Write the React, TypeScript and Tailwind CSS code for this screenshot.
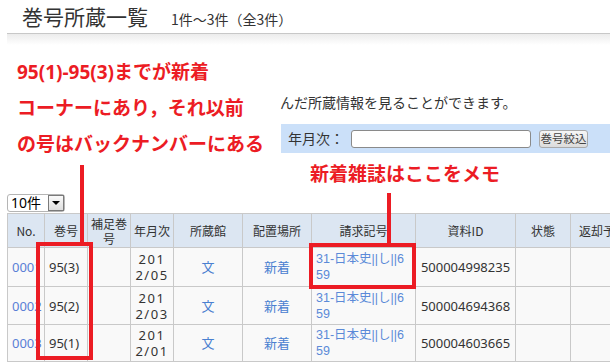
import React from 'react';

const rows = [
  { no: '0001', vol: '95(3)', ym: ['201', '2/05'], id: '500004998235' },
  { no: '0002', vol: '95(2)', ym: ['201', '2/03'], id: '500004694368' },
  { no: '0003', vol: '95(1)', ym: ['201', '2/01'], id: '500004603665' },
];

const rowHeights = ['h-[39px]', 'h-[38px]', 'h-[37px]'];

export default function App() {
  return (
    <div className="relative w-[610px] h-[364px] overflow-hidden bg-white text-[#333] font-['Noto_Sans','Noto_Sans_CJK_JP',sans-serif]">
      {/* page title */}
      <div className="flex items-baseline h-[33px] pl-[22px] pt-[1px]">
        <h1 className="text-[21px] leading-[30px] font-['Noto_Sans_CJK_JP',sans-serif]">巻号所蔵一覧</h1>
        <span className="ml-[23px] text-[14px] font-['Noto_Sans_CJK_JP',sans-serif]">1件～3件（全3件）</span>
      </div>
      <div className="ml-[7px] h-[12px] border-t border-[#c8c8c8] bg-gradient-to-b from-[#ececec] to-white" />

      {/* annotation + search area */}
      <div className="flex h-[117px]">
        <div className="w-[280px] pl-[17px] pt-[9px] text-[19px] leading-[36px] font-bold text-[#ec1c24]">
          <div>95(1)-95(3)までが新着</div>
          <div>コーナーにあり，それ以前</div>
          <div>の号はバックナンバーにある</div>
        </div>
        <div className="flex-1 pt-[48px]">
          <p className="text-[14px] leading-[20px] whitespace-nowrap">んだ所蔵情報を見ることができます。</p>
          <div className="mt-[11px] ml-[1px] h-[29px] bg-[#cbe0f9] flex items-center pl-[7px]">
            <span className="text-[14px]">年月次：</span>
            <input className="ml-[7px] w-[180px] h-[18px] bg-white border border-[#8a8a8a] rounded-[3px]" />
            <button className="ml-[8px] h-[18px] w-[49px] rounded-[3px] border border-[#a9a9a9] bg-gradient-to-b from-[#f6f6f6] to-[#dcdcdc] text-[11.5px] leading-[16px] text-[#444]">
              巻号絞込
            </button>
          </div>
        </div>
      </div>

      <div className="pl-[310px] h-[24px] text-[19px] leading-[24px] font-bold text-[#ec1c24]">新着雑誌はここをメモ</div>

      {/* page size select */}
      <div className="mt-[8px] ml-[7px] flex items-center w-[58px] h-[18px] bg-white border border-[#b5b5b5] rounded-[3px]">
        <span className="flex-1 pl-[3px] text-[14px] leading-[16px] text-black">10件</span>
        <span className="w-[16px] h-[16px] border border-[#7a7a7a] bg-gradient-to-b from-[#fafafa] to-[#dedede] flex items-center justify-center">
          <span className="w-0 h-0 border-l-[4px] border-r-[4px] border-t-[4px] border-l-transparent border-r-transparent border-t-black" />
        </span>
      </div>

      {/* holdings table */}
      <table className="mt-[1px] ml-[7px] table-fixed border-collapse w-[643px]">
        <colgroup>
          <col className="w-[37px]" />
          <col className="w-[43px]" />
          <col className="w-[43px]" />
          <col className="w-[43px]" />
          <col className="w-[69px]" />
          <col className="w-[69px]" />
          <col className="w-[104px]" />
          <col className="w-[100px]" />
          <col className="w-[55px]" />
          <col className="w-[80px]" />
        </colgroup>
        <thead>
          <tr className="h-[34px] bg-[#dce6f2] text-[12px] leading-[15px] font-['Noto_Sans_CJK_JP',sans-serif]">
            <th className="border border-[#c9c9c9] font-normal">No.</th>
            <th className="border border-[#c9c9c9] font-normal">巻号</th>
            <th className="border border-[#c9c9c9] font-normal">
              補足巻
              <br />号
            </th>
            <th className="border border-[#c9c9c9] font-normal">年月次</th>
            <th className="border border-[#c9c9c9] font-normal">所蔵館</th>
            <th className="border border-[#c9c9c9] font-normal">配置場所</th>
            <th className="border border-[#c9c9c9] font-normal">請求記号</th>
            <th className="border border-[#c9c9c9] font-normal">資料ID</th>
            <th className="border border-[#c9c9c9] font-normal">状態</th>
            <th className="border border-[#c9c9c9] font-normal text-left pl-[8px] whitespace-nowrap overflow-hidden">返却予定日</th>
          </tr>
        </thead>
        <tbody className="text-[13px] leading-[16px]">
          {rows.map((r, i) => (
            <tr key={r.no} className={`${rowHeights[i]} bg-[#f9f9f9]`}>
              <td className="border border-[#c9c9c9] pl-[4px] text-[#5a7fd6] overflow-hidden whitespace-nowrap">{r.no}</td>
              <td className="border border-[#c9c9c9] pl-[4px]">{r.vol}</td>
              <td className="border border-[#c9c9c9]" />
              <td className="border border-[#c9c9c9] text-center tracking-[1.5px] whitespace-nowrap">
                {r.ym[0]}
                <br />
                {r.ym[1]}
              </td>
              <td className="border border-[#c9c9c9] text-center text-[#4a80d0]">文</td>
              <td className="border border-[#c9c9c9] text-center text-[#4a80d0]">新着</td>
              <td className="border border-[#c9c9c9] pl-[4px] text-[#5b8ad8] whitespace-nowrap overflow-hidden text-[12.5px] font-['Liberation_Sans','Noto_Sans_CJK_JP',sans-serif]">
                31-日本史||し||6
                <br />
                59
              </td>
              <td className="border border-[#c9c9c9] text-center">{r.id}</td>
              <td className="border border-[#c9c9c9]" />
              <td className="border border-[#c9c9c9]" />
            </tr>
          ))}
        </tbody>
      </table>

      {/* red markers drawn over the screenshot */}
      <div className="absolute left-[80px] top-[165px] w-[4px] h-[78px] bg-[#ec1c24]" />
      <div className="absolute left-[36px] top-[242px] w-[57px] h-[118px] border-[4px] border-[#ec1c24]" />
      <div className="absolute left-[387px] top-[193px] w-[4px] h-[51px] bg-[#ec1c24]" />
      <div className="absolute left-[309px] top-[243px] w-[107px] h-[46px] border-[4px] border-[#ec1c24]" />
    </div>
  );
}
